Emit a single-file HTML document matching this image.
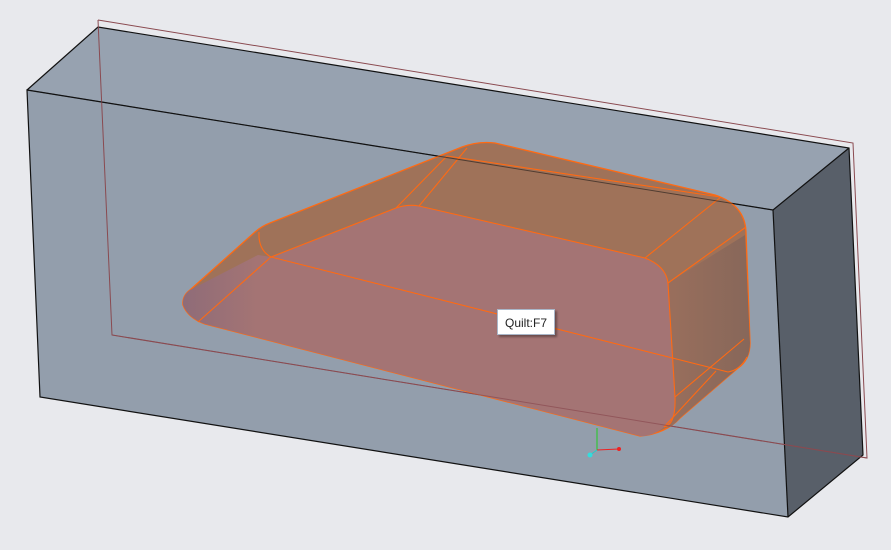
<!DOCTYPE html>
<html><head><style>
html,body{margin:0;padding:0;background:#e8e9ed;width:891px;height:550px;overflow:hidden}
.tip{position:absolute;left:497px;top:309px;width:58px;height:26px;background:#fff;border:1px solid #a9b6c8;box-shadow:2px 2px 2px rgba(0,0,0,.35);font:12px "Liberation Sans",sans-serif;color:#222;line-height:26px;text-align:center;box-sizing:border-box}
</style></head><body>
<svg width="891" height="550" style="position:absolute;left:0;top:0">
<defs>
<linearGradient id="rs" x1="0" y1="0" x2="1" y2="0">
<stop offset="0" stop-color="#9a6f5c"/><stop offset="1" stop-color="#87675a"/>
</linearGradient>
<linearGradient id="lt" x1="0" y1="0" x2="1" y2="0">
<stop offset="0" stop-color="#8f6c78"/><stop offset="0.15" stop-color="#a47474"/>
</linearGradient>
</defs>
<!-- box -->
<polygon points="27,90 98,27 849,148 773,210" fill="#97a2b0"/>
<polygon points="27,90 773,210 788,517 40,397" fill="#939eac"/>
<polygon points="773,210 849,148 863,455 788,517" fill="#585f69"/>
<g stroke="#111" stroke-width="1.2" fill="none">
<polyline points="27,90 98,27 849,148 863,455 788,517 40,397 27,90 773,210 849,148"/>
<line x1="773" y1="210" x2="788" y2="517"/>
</g>
<!-- red outline -->
<g stroke="#8a4a50" stroke-width="1" fill="none">
<polyline points="98,20 853,143 867,458 112,335 98,20"/>
</g>
<!-- quilt silhouette -->
<path d="M190,290 L255,232 Q262,226 270,223 L462,147 Q478,141 495,143 L715,195 Q745,205 746,232 L750,343 Q750,360 738,368 L680,418 Q665,434 640,436 L205,324 Q188,318 183,305 Q182,296 190,290 Z" fill="#9f7259" stroke="#ff6a13" stroke-width="1.3"/>
<path d="M668,283 L745,235 L750,343 Q750,360 738,368 L680,418 Q670,430 664,427 L675,397 Z" fill="url(#rs)"/>
<!-- front face -->
<path d="M271,257 L396,208 Q408,204 419,206 L645,258 Q666,266 668,283 L675,397 Q676,425 664,427 Q652,437 640,436 L205,324 Q188,318 183,305 Q182,296 190,290 L258,255 Z" fill="url(#lt)"/>
<g stroke="#ff6a13" stroke-width="1.1" fill="none">
<path d="M271,257 L396,208 Q408,204 419,206 L645,258 Q666,266 668,283 L675,397 Q676,425 664,427"/>
<path d="M271,257 Q258,250 259,232"/>
<line x1="271" y1="257" x2="728" y2="372"/>
<line x1="271" y1="257" x2="198" y2="322"/>
<line x1="396" y1="208" x2="447" y2="156"/>
<line x1="419" y1="206" x2="467" y2="148"/>
<line x1="447" y1="156" x2="720" y2="197"/>
<line x1="645" y1="258" x2="721" y2="197"/>
<line x1="668" y1="283" x2="746" y2="227"/>
<line x1="675" y1="397" x2="744" y2="339"/>
<line x1="664" y1="427" x2="716" y2="371"/>
<path d="M728,372 Q740,370 747,357"/>
</g>
<!-- black line through -->
<line x1="27" y1="90" x2="773" y2="210" stroke="#111" stroke-width="1" opacity=".55"/>
<line x1="112" y1="335" x2="867" y2="458" stroke="#8a4a50" stroke-width="1" opacity=".7"/>
<!-- axis -->
<line x1="597" y1="428" x2="597" y2="450" stroke="#2c2" stroke-width="1"/>
<line x1="597" y1="450" x2="619" y2="449" stroke="#e22" stroke-width="1"/>
<circle cx="619" cy="449" r="2" fill="#e22"/>
<line x1="597" y1="450" x2="590" y2="455" stroke="#2cc" stroke-width="1"/>
<circle cx="590" cy="455" r="2.5" fill="#3dd"/>
</svg>
<div class="tip">Quilt:F7</div>
</body></html>
